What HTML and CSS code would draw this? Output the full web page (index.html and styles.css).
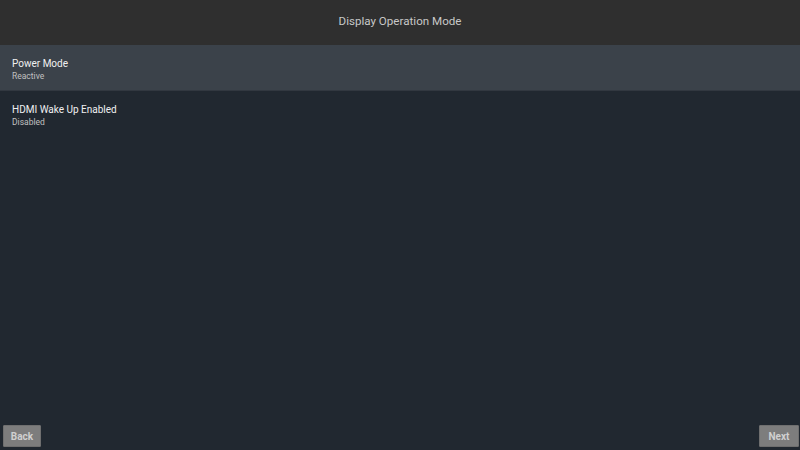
FILE: index.html
```html
<!DOCTYPE html>
<html>
<head>
<meta charset="utf-8">
<link rel="stylesheet" href="styles.css">
</head>
<body>
<div class="screen">
  <header class="header">Display Operation Mode</header>
  <main class="list">
    <div class="row selected">
      <div class="row-title">Power Mode</div>
      <div class="row-sub">Reactive</div>
    </div>
    <div class="row">
      <div class="row-title">HDMI Wake Up Enabled</div>
      <div class="row-sub">Disabled</div>
    </div>
  </main>
  <footer class="footer">
    <button class="btn">Back</button>
    <button class="btn">Next</button>
  </footer>
</div>
</body>
</html>
```
FILE: styles.css
```css
html, body {
  margin: 0;
  padding: 0;
  background: #212830;
}
.screen {
  width: 800px;
  height: 450px;
  display: flex;
  flex-direction: column;
  font-family: Roboto, "Liberation Sans", sans-serif;
  background: #212830;
  overflow: hidden;
}
.header {
  height: 45px;
  flex: none;
  background: #2f2f2f;
  color: #c8c8c8;
  font-size: 11.6px;
  display: flex;
  align-items: center;
  justify-content: center;
  padding-bottom: 3px;
  box-sizing: border-box;
}
.list {
  flex: 1;
  display: flex;
  flex-direction: column;
}
.row {
  height: 46px;
  box-sizing: border-box;
  padding: 12px 12px 0;
}
.row.selected {
  background: #3b424a;
  border-bottom: 1px solid #323840;
}
.row-title {
  color: #f0f0f0;
  font-size: 10px;
  line-height: 13px;
}
.row-sub {
  color: #c0c0c0;
  font-size: 8.5px;
  line-height: 11px;
  margin-top: 1px;
}
.footer {
  display: flex;
  justify-content: space-between;
  padding: 0 1px 3px 3px;
  height: 25px;
  box-sizing: border-box;
}
.btn {
  width: 38px;
  height: 22px;
  background: #7d7d7d;
  border: 1px solid #6f6f6f;
  color: #d0d0d0;
  font-family: Roboto, "Liberation Sans", sans-serif;
  font-size: 10px;
  font-weight: bold;
  padding: 0;
  border-radius: 1px;
}
.btn:last-child {
  width: 40px;
}
```
